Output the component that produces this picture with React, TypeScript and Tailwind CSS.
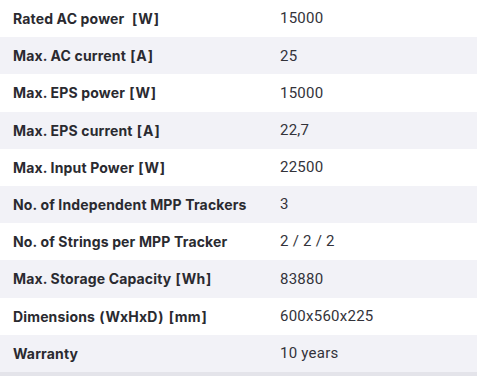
import React from "react";

const rows: [string, string][] = [
  ["Rated AC power  [W]", "15000"],
  ["Max. AC current [A]", "25"],
  ["Max. EPS power [W]", "15000"],
  ["Max. EPS current [A]", "22,7"],
  ["Max. Input Power [W]", "22500"],
  ["No. of Independent MPP Trackers", "3"],
  ["No. of Strings per MPP Tracker", "2 / 2 / 2"],
  ["Max. Storage Capacity [Wh]", "83880"],
  ["Dimensions (WxHxD) [mm]", "600x560x225"],
  ["Warranty", "10 years"],
];

function Label({ text }: { text: string }) {
  const parts = text.split(/([\[\]\(\)])/);
  return (
    <>
      {parts.map((p, i) =>
        /^[\[\]\(\)]$/.test(p) ? (
          <span key={i} className="mx-[0.75px]">
            {p}
          </span>
        ) : (
          <React.Fragment key={i}>{p}</React.Fragment>
        )
      )}
    </>
  );
}

export default function App() {
  return (
    <div className="w-[477px] h-[376px] bg-[#e4e4ea]">
      {rows.map(([k, v], i) => (
        <div
          key={i}
          className={`flex items-center h-[37.2px] ${i % 2 === 0 ? "bg-white" : "bg-[#f2f2f7]"}`}
        >
          <div className="w-[280px] pl-[13px] font-['Inter',sans-serif] text-[14px] tracking-[0.15px] font-bold text-[#2a2a30] whitespace-pre">
            <Label text={k} />
          </div>
          <div className="font-['Roboto',sans-serif] text-[15px] tracking-[0.25px] text-[#33333a]">{v}</div>
        </div>
      ))}
    </div>
  );
}
